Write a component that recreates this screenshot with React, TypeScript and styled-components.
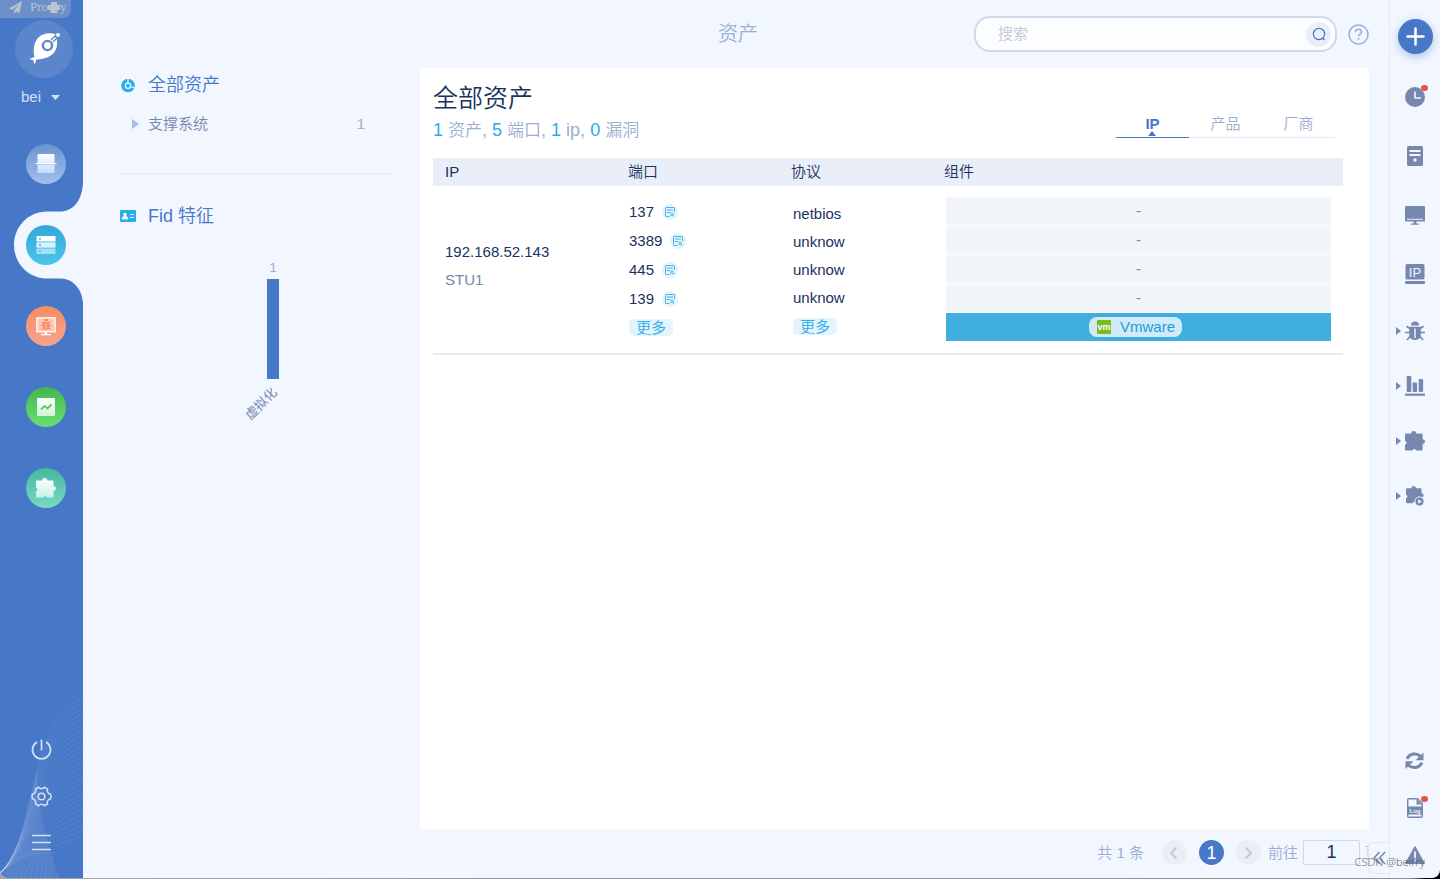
import React from "react";
import styled, { createGlobalStyle, css } from "styled-components";

const c = {
  bg: "#f1f6ff",
  blue: "#4777c7",
  cyan: "#29adeb",
  navy: "#18335f",
  slate: "#7688ad",
  pale: "#9aadd3",
  line: "#e4eaf6",
};

const GlobalStyle = createGlobalStyle`
  * { box-sizing: border-box; }
  html { background: linear-gradient(90deg, #a2a3a5 0, #8b8e94 98%, #000 99%); }
  body {
    margin: 0;
    font-family: "Liberation Sans", "Noto Sans CJK SC", sans-serif;
    font-size: 15px;
    line-height: 20px;
    font-weight: 350;
    color: ${c.navy};
  }
  button, input { font: inherit; color: inherit; padding: 0; margin: 0; border: 0; background: none; }
  button { cursor: pointer; }
  a { color: inherit; text-decoration: none; }
  svg { display: block; flex: none; }
  h1, h2, p, ul { margin: 0; padding: 0; font-weight: 350; list-style: none; }
`;

const Shell = styled.div`
  position: relative;
  display: flex;
  min-height: calc(100vh - 1px);
  background: ${c.bg};
  border-radius: 0 0 8px 8px;
  overflow: hidden;
`;

/* ---------- left bar ---------- */

const Sidebar = styled.aside`
  position: relative;
  flex: none;
  width: 83px;
  display: flex;
  flex-direction: column;
  padding-top: 20px;
  background: ${c.blue};
  color: #d3e0f8;
`;

const ProxyTag = styled.div`
  position: absolute;
  top: 0;
  left: 0;
  display: flex;
  align-items: center;
  width: 71px;
  height: 18px;
  padding: 0 0 4px 9px;
  border-radius: 0 0 8px 0;
  background: #6c8fca;
  color: #bcc4d2;
  font-family: "Liberation Serif", serif;
  font-size: 13px;
  line-height: 14px;
`;

const ProxyText = styled.span`
  display: flex;
  align-items: center;
  margin-left: 8px;
`;

const Avatar = styled.div`
  width: 58px;
  height: 58px;
  margin-left: 15px;
  border-radius: 50%;
  background: #5c86cb;
`;

const UserButton = styled.button`
  display: flex;
  align-items: center;
  gap: 10px;
  height: 38px;
  margin-left: 21px;
`;

const Nav = styled.nav`
  display: flex;
  flex-direction: column;
  gap: 41px;
  padding: 28px 0 0 26px;
`;

const NavLink = styled.a`
  position: relative;
  display: block;
  width: 40px;
  height: 40px;
`;

const NavDisc = styled.span<{ $from: string; $to: string }>`
  position: relative;
  display: grid;
  place-items: center;
  width: 40px;
  height: 40px;
  border-radius: 50%;
  background: linear-gradient(${(p) => p.$from}, ${(p) => p.$to});
`;

const Notch = styled.svg`
  position: absolute;
  left: -12px;
  top: -42px;
`;

const Waves = styled.svg`
  position: absolute;
  left: 0;
  bottom: 0;
`;

const SideTools = styled.div`
  position: relative;
  display: flex;
  flex-direction: column;
  gap: 24px;
  margin-top: auto;
  padding: 0 0 23px 30px;
`;

const SideTool = styled.button`
  width: 23px;
  height: 23px;
`;

/* ---------- middle ---------- */

const Main = styled.main`
  position: relative;
  flex: 1;
  min-width: 0;
  display: flex;
  flex-direction: column;
`;

const Header = styled.header`
  display: grid;
  grid-template-columns: 1fr auto 1fr;
  align-items: center;
  height: 68px;
  padding: 0 20px 0 24px;
`;

const PageTitle = styled.h1`
  grid-column: 2;
  font-size: 20px;
  line-height: 28px;
  color: ${c.pale};
`;

const HeaderTools = styled.div`
  display: flex;
  align-items: center;
  justify-content: flex-end;
  gap: 11px;
`;

const SearchBox = styled.form`
  display: flex;
  align-items: center;
  width: 363px;
  height: 36px;
  padding: 0 4px 0 22px;
  border: 2px solid #cfd9ea;
  border-radius: 16px;
  background: #fcfdff;
`;

const SearchInput = styled.input`
  flex: 1;
  min-width: 0;
  outline: none;
  &::placeholder { color: #c3c7d0; opacity: 1; }
`;

const SearchButton = styled.button`
  display: grid;
  place-items: center;
  width: 25px;
  height: 25px;
  border-radius: 50%;
  background: #e9eef8;
`;

const Content = styled.div`
  flex: 1;
  display: flex;
  padding-right: 20px;
`;

const Filters = styled.section`
  flex: none;
  width: 337px;
  padding: 0 25px 0 37px;
`;

const FilterTitle = styled.h2`
  display: flex;
  align-items: center;
  gap: 12px;
  height: 34px;
  font-size: 18px;
  color: ${c.blue};
`;

const FilterRow = styled.button`
  display: flex;
  align-items: center;
  width: 100%;
  height: 44px;
  padding: 0 30px 0 12px;
  gap: 9px;
  color: ${c.slate};
`;

const FilterCount = styled.span`
  margin-left: auto;
  color: ${c.pale};
`;

const Divider = styled.hr`
  margin: 27px 0 25px;
  border: 0;
  border-top: 1px solid ${c.line};
`;

const Card = styled.section`
  flex: 1;
  min-width: 0;
  padding: 14px 26px 20px 13px;
  background: #fff;
`;

const CardHead = styled.div`
  display: flex;
  align-items: flex-end;
  justify-content: space-between;
  margin-bottom: 16px;
`;

const CardTitle = styled.h2`
  font-size: 25px;
  line-height: 32px;
`;

const Stats = styled.p`
  margin-top: 4px;
  height: 24px;
  font-size: 18px;
  line-height: 24px;
  color: ${c.pale};
  b { font-weight: 400; color: ${c.cyan}; }
`;

const Unit = styled.span`
  font-size: 17px;
`;

const Tabs = styled.div`
  display: flex;
  margin: 0 8px 4px 0;
`;

const Tab = styled.button<{ $active?: boolean }>`
  position: relative;
  width: 73px;
  height: 28px;
  border-bottom: 1px solid ${c.line};
  color: ${c.pale};
  ${(p) =>
    p.$active &&
    css`
      border-color: ${c.blue};
      color: ${c.blue};
      font-weight: 700;
      &::after {
        content: "";
        position: absolute;
        left: 32px;
        bottom: 1px;
        border: 4px solid transparent;
        border-top: 0;
        border-bottom: 5px solid ${c.blue};
      }
    `}
`;

const Table = styled.table`
  width: 100%;
  table-layout: fixed;
  border-collapse: collapse;
  text-align: left;
  th {
    height: 28px;
    padding: 0;
    background: #eaeef8;
    font-weight: 350;
    line-height: 20px;
  }
  th:first-child, td:first-child { padding-left: 12px; }
  tbody tr { border-bottom: 2px solid #e6ebf7; }
`;

const Col = styled.col<{ $w?: number }>`
  width: ${(p) => (p.$w ? `${p.$w}px` : "auto")};
`;

const Cell = styled.td<{ $pad?: string }>`
  vertical-align: top;
  padding: ${(p) => p.$pad || "0"};
`;

const HostCell = styled.td`
  vertical-align: middle;
  padding: 0 0 8px;
  line-height: 28px;
`;

const HostName = styled.div`
  color: ${c.slate};
`;

const Line = styled.li<{ $h: number }>`
  display: flex;
  align-items: center;
  gap: 8px;
  height: ${(p) => p.$h}px;
`;

const PortButton = styled.button`
  display: grid;
  place-items: center;
  width: 16px;
  height: 16px;
  border-radius: 50%;
  background: #e3f4fc;
`;

const MoreButton = styled.button`
  width: 44px;
  height: 17px;
  border-radius: 5px;
  background: #e3f4fc;
  color: ${c.cyan};
  line-height: 17px;
`;

const Components = styled.ul`
  display: grid;
  gap: 1px;
`;

const Component = styled.li<{ $on?: boolean }>`
  display: flex;
  align-items: center;
  justify-content: center;
  height: 28px;
  background: ${(p) => (p.$on ? "#40afe0" : "#f2f5fa")};
  color: ${c.slate};
`;

const Product = styled.a`
  display: flex;
  align-items: center;
  gap: 9px;
  height: 20px;
  margin-right: 6px;
  padding: 0 7px 0 8px;
  border-radius: 8px;
  background: #d0eaf8;
  color: #249bd8;
`;

const Footer = styled.footer`
  display: flex;
  align-items: center;
  justify-content: flex-end;
  height: 49px;
  padding: 0 9px 2px 0;
  color: ${c.pale};
`;

const Pages = styled.div`
  display: flex;
  gap: 12px;
  margin: 0 7px 0 18px;
`;

const PageButton = styled.button<{ $active?: boolean }>`
  display: grid;
  place-items: center;
  width: 25px;
  height: 25px;
  border-radius: 50%;
  background: ${(p) => (p.$active ? c.blue : "#e9eef7")};
  color: ${(p) => (p.$active ? "#fff" : "#c0c7d4")};
  font-size: 18px;
`;

const Goto = styled.label`
  display: flex;
  align-items: center;
  gap: 5px;
`;

const GotoInput = styled.input`
  width: 57px;
  height: 25px;
  border: 1px solid #cdd8ec;
  border-radius: 2px;
  background: ${c.bg};
  text-align: center;
  font-size: 18px;
  color: ${c.navy};
`;

const Collapse = styled.button`
  position: absolute;
  right: 0;
  bottom: 4px;
  display: grid;
  place-items: center;
  width: 21px;
  height: 32px;
  border: 1px solid #dfe7f5;
  border-right: 0;
  border-radius: 6px 0 0 6px;
  background: ${c.bg};
  color: #687fae;
`;

/* ---------- right bar ---------- */

const Rail = styled.aside`
  flex: none;
  display: flex;
  flex-direction: column;
  width: 51px;
  padding-top: 19px;
  border-left: 1px solid ${c.line};
  color: ${c.slate};
`;

const AddButton = styled.button`
  display: grid;
  place-items: center;
  align-self: center;
  width: 35px;
  height: 35px;
  margin-bottom: 13px;
  border-radius: 50%;
  background: ${c.blue};
  box-shadow: 0 3px 8px rgba(71, 119, 199, 0.4);
`;

const RailGroup = styled.div<{ $bottom?: boolean }>`
  display: flex;
  flex-direction: column;
  margin-top: ${(p) => (p.$bottom ? "auto" : "0")};
`;

const RailButton = styled.button<{ $h: number }>`
  display: grid;
  grid-template-columns: 12px 20px 12px;
  column-gap: 3px;
  align-items: center;
  height: ${(p) => p.$h}px;
`;

const RailArrow = styled.span`
  justify-self: end;
  margin-right: 1px;
  border: 4px solid transparent;
  border-left: 5px solid ${c.slate};
  border-right: 0;
`;

const RailIcon = styled.span`
  position: relative;
  grid-column: 2;
`;

const Badge = styled.i`
  position: absolute;
  top: -2px;
  right: -3px;
  width: 7px;
  height: 6px;
  border-radius: 50%;
  background: #f04c48;
`;

const Credit = styled.div`
  position: absolute;
  right: 15px;
  bottom: 8px;
  font-family: "Noto Sans", sans-serif;
  font-size: 11px;
  line-height: 16px;
  color: rgba(70, 74, 82, 0.8);
  pointer-events: none;
`;

/* ---------- drawings ---------- */

const PUZZLE =
  "M1.500 2.500H6.200A2.500 2.500 0 0 1 11.200 2.500H16.200C17 2.500 17.600 3 17.600 3.800V8.200A2.400 2.400 0 0 1 17.600 13V18.200C17.600 19 17 19.600 16.200 19.600H11A1.700 1.500 0 0 0 7.600 19.600H1.500C.7 19.600 0 19 0 18.200V13.500A1.500 1.700 0 0 0 0 10V3.800C0 3 .7 2.500 1.500 2.500Z";

const Bug = ({ size = 20, cut }: { size?: number; cut: string }) => (
  <svg width={size} height={size} viewBox="0 0 20 20" fill="currentColor">
    <path d="M6 4.500a4 4 0 0 1 8 0z" />
    <path d="M4.200 5.800h11.600v8a5.800 5.200 0 0 1-11.600 0z" />
    <path d="M1.500 5.200l3.800 2.500M18.500 5.200l-3.800 2.500M0 11.500h5M20 11.500h-5M2 19l3.500-4M18 19l-3.500-4" stroke="currentColor" strokeWidth="1.700" fill="none" />
    <path d="M10 7.500v9.500" stroke={cut} strokeWidth="1.400" />
  </svg>
);

const Chevron = ({ left }: { left?: boolean }) => (
  <svg width="14" height="14" viewBox="0 0 14 14" fill="none" stroke="currentColor" strokeWidth="1.800">
    <path d={left ? "M9.500 1.500L4 7l5.500 5.500" : "M4.500 1.500L10 7l-5.500 5.500"} />
  </svg>
);

const Logo = () => (
  <svg width="58" height="58" viewBox="0 0 58 58">
    <path d="M14 39l5.500-2C18 30 18.500 22 24 17c4.500-4 11-4.500 16.500-2.800C42.800 20 43 27 39.500 32c-4.500 5.500-11 7-18 7.500L19.500 44.500 18.200 40z" fill="#fff" />
    <path d="M37 21l7-7" stroke="#5c86cb" strokeWidth="4" />
    <path d="M36 22l4.500-4.500" stroke="#fff" strokeWidth="1.500" />
    <circle cx="32.500" cy="25.500" r="4.600" fill="#fff" stroke="#5c86cb" strokeWidth="2.400" />
    <circle cx="43" cy="15" r="2" fill="#fff" />
  </svg>
);

const ScanIcon = () => (
  <svg width="22" height="22" viewBox="0 0 22 22">
    <defs>
      <linearGradient id="scan" x2="0" y2="1"><stop stopColor="#fff" /><stop offset="1" stopColor="#c3dafc" /></linearGradient>
    </defs>
    <rect x="2.500" y="1" width="17" height="19" rx="1" fill="url(#scan)" />
    <path d="M2.500 11.500h17" stroke="#b9cff3" strokeWidth="1" />
    <path d="M.5 10.500h21" stroke="#fff" strokeWidth="1" />
  </svg>
);

const AssetIcon = () => (
  <svg width="20" height="20" viewBox="0 0 20 20">
    <rect x=".5" y="1" width="19" height="5.500" rx=".5" fill="#fff" />
    <rect x=".5" y="7.300" width="19" height="5.400" fill="#d9f1fb" />
    <rect x=".5" y="13.500" width="19" height="5.500" rx=".5" fill="#a6e0f6" />
    <path d="M4 2.800v2M4 9v2M4 15.200v2" stroke="#38aee0" strokeWidth="1.400" />
  </svg>
);

const VulnIcon = () => (
  <svg width="20" height="19" viewBox="0 0 20 19" color="#fa8f6b">
    <rect x=".8" y=".8" width="18.400" height="14" fill="#fdcab8" stroke="#fff" strokeWidth="1.200" />
    <path d="M9 15h2v2H9zM5 17h10v1.200H5z" fill="#fff" />
    <svg x="4" y="1.500" width="12" height="12"><Bug size={12} cut="#fdcab8" /></svg>
  </svg>
);

const ReportIcon = () => (
  <svg width="18" height="18" viewBox="0 0 18 18">
    <defs>
      <linearGradient id="report" x2="0" y2="1"><stop stopColor="#fff" /><stop offset="1" stopColor="#d0f3d4" /></linearGradient>
    </defs>
    <rect width="18" height="18" rx="1" fill="url(#report)" />
    <path d="M4 11.500l3.500-3.500 3 2.500 4-4" fill="none" stroke="#45bb51" strokeWidth="1.600" />
  </svg>
);

const PluginIcon = () => (
  <svg width="20" height="20" viewBox="0 0 20 20">
    <defs>
      <linearGradient id="plugin" x2="0" y2="1"><stop stopColor="#fff" /><stop offset="1" stopColor="#c9f1e7" /></linearGradient>
    </defs>
    <path d={PUZZLE} fill="url(#plugin)" />
  </svg>
);

const navItems = [
  { name: "扫描", from: "#6b93cf", to: "#a2bfee", icon: <ScanIcon /> },
  { name: "资产", from: "#34a6da", to: "#4cc5ea", icon: <AssetIcon />, active: true },
  { name: "漏洞", from: "#f78d64", to: "#f6a48e", icon: <VulnIcon /> },
  { name: "报告", from: "#41b94e", to: "#6ade72", icon: <ReportIcon /> },
  { name: "插件", from: "#46b79e", to: "#78d9c6", icon: <PluginIcon /> },
];

const mix = (a: number, b: number, t: number) => a + (b - a) * t;

const WaveLines = () => (
  <Waves width="83" height="180" viewBox="0 0 83 180" fill="none" stroke="#fff">
    <path d="M0 175C26 146 32 100 37 70 36 112 50 155 60 180H4z" fill="#fff" fillOpacity=".07" stroke="none" />
    {Array.from({ length: 27 }, (_, i) => {
      const t = i / 26;
      return (
        <path
          key={i}
          d={`M0 175C${mix(38, 20, t)} ${mix(140, 158, t)} ${mix(26, 50, t)} ${mix(22, 150, t)} 83 ${mix(0, 138, t)}`}
          strokeOpacity=".1"
          strokeWidth=".8"
        />
      );
    })}
    {Array.from({ length: 10 }, (_, i) => (
      <path key={`f${i}`} d={`M${i * 5 + 5} 180Q${14 + i * 4} ${162 - i} ${30 + i * 3} 154`} strokeOpacity=".1" strokeWidth=".8" />
    ))}
  </Waves>
);

const railTop = [
  {
    name: "历史", badge: true,
    icon: <><circle cx="10" cy="10" r="10" /><path d="M10 4.500v6.500h6" fill="none" stroke="#f1f6ff" strokeWidth="1.600" /></>,
  },
  {
    name: "服务器",
    icon: <><rect x="2" y="0" width="16" height="20" rx="1.500" /><path d="M4.500 5h11M4.500 9h11" stroke="#f1f6ff" strokeWidth="1.800" /><circle cx="10" cy="14" r="1.700" fill="#f1f6ff" /></>,
  },
  {
    name: "终端",
    icon: <><rect x="0" y="1" width="20" height="15.500" rx="1" /><path d="M2 14.300h16" stroke="#f1f6ff" strokeWidth="1" /><path d="M8.700 16h2.600v2.500h2.700v1.200H6v-1.200h2.700z" /></>,
  },
  {
    name: "IP",
    icon: <><rect x=".5" y="0" width="19" height="15.500" rx="1.500" /><rect x="0" y="17" width="20" height="3" rx="1" /><text x="10" y="12.500" textAnchor="middle" fontSize="13" fill="#f1f6ff">IP</text></>,
  },
];

const railMiddle = [
  { name: "漏洞", icon: <Bug cut="#f1f6ff" /> },
  {
    name: "统计",
    icon: <><rect x="1.700" y="0" width="4.600" height="16" rx="1" /><rect x="7.700" y="6.500" width="4.400" height="9.500" rx="1" /><rect x="13.700" y="3" width="4.400" height="13" rx="1" /><rect x="0" y="17.600" width="20" height="2.200" /></>,
  },
  { name: "插件", icon: <path d={PUZZLE} /> },
  {
    name: "运行插件",
    icon: <><path d={PUZZLE} transform="translate(1 0) scale(.88)" /><circle cx="14.500" cy="15.500" r="4.600" stroke="#f1f6ff" strokeWidth="1" /><path d="M13.200 13.300v4.400l3.600-2.200z" fill="#f1f6ff" /></>,
  },
];

const railBottom = [
  {
    name: "刷新",
    icon: (
      <>
        <path d="M2 7.800C4.500 2.500 11.500 1.200 15.800 5.500M17 11.700C14.500 17 7.500 18.300 3.200 14" fill="none" stroke="currentColor" strokeWidth="3" />
        <path d="M18.500 1.500V9.200H10.500zM.5 18V10.300H8.500z" />
      </>
    ),
  },
  {
    name: "日志", badge: true,
    icon: <><path d="M4 .8h8.500L17.200 5v13c0 .8-.5 1.300-1.200 1.300H4c-.8 0-1.300-.5-1.300-1.300V2C2.700 1.300 3.200.8 4 .8z" fill="none" stroke="currentColor" strokeWidth="1.500" /><path d="M11.500 1v5.500H17z" /><path d="M2.500 8.500h15v8h-15z" /><text x="10" y="14.500" textAnchor="middle" fontSize="6" fontWeight="700" fill="#f1f6ff">Log</text></>,
  },
  {
    name: "告警",
    icon: <><path d="M10 1.500L19.500 18.500H.5z" stroke="currentColor" strokeLinejoin="round" /><path d="M10 6.500v6.500M10 14.500v2" stroke="#f1f6ff" strokeWidth="1.800" /></>,
  },
];

type RailEntry = { name: string; icon: React.ReactNode; badge?: boolean };

const RailItem = ({ item, h, arrow }: { item: RailEntry; h: number; arrow?: boolean }) => (
  <RailButton $h={h} aria-label={item.name}>
    {arrow && <RailArrow />}
    <RailIcon>
      <svg width="20" height="20" viewBox="0 0 20 20" fill="currentColor" overflow="visible">{item.icon}</svg>
      {item.badge && <Badge />}
    </RailIcon>
  </RailButton>
);

const PortGlyph = () => (
  <svg width="10" height="10" viewBox="0 0 10 10" fill="none" stroke="#45b4e8" strokeWidth="1">
    <path d="M4.500 9.500H1.200a.7.7 0 0 1-.7-.7V1.200C.5.800.8.500 1.200.500h7.600c.4 0 .7.300.7.700V5M2 3h6M2 5.500h3" />
    <circle cx="7" cy="7.300" r="1.400" />
    <path d="M8 8.500l1.300 1.200" />
  </svg>
);

const ports = ["137", "3389", "445", "139"];
const protocols = ["netbios", "unknow", "unknow", "unknow"];

export default function App() {
  return (
    <>
      <GlobalStyle />
      <Shell>
        <Sidebar>
          <WaveLines />
          <ProxyTag>
            <svg width="13" height="13" viewBox="0 0 13 13" fill="currentColor">
              <path d="M13 0L0 7.500l3.500 1.300L11 2.500 5 9.500V13l2-2.500 3.500 1.500z" />
            </svg>
            <ProxyText>
              Pro
              <svg width="12" height="11" viewBox="0 0 12 11" fill="currentColor">
                <path d="M3 0h6v3h3v5H9.500v3h-7V8H0V3h3z" />
              </svg>
              y
            </ProxyText>
          </ProxyTag>
          <Avatar><Logo /></Avatar>
          <UserButton>
            bei
            <svg width="9" height="5" viewBox="0 0 9 5" fill="currentColor"><path d="M0 0h9L4.500 5z" /></svg>
          </UserButton>
          <Nav>
            {navItems.map((n) => (
              <NavLink key={n.name} href="#" aria-label={n.name}>
                {n.active && (
                  <Notch width="70" height="120" viewBox="0 0 70 120">
                    <path d="M69 0H70V120H69C68 106 59 95.500 46 95.500H33C14 95.500 0 80 0 62S14 28.500 33 28.500H46C59 28.500 68 18 69 0z" fill={c.bg} />
                  </Notch>
                )}
                <NavDisc $from={n.from} $to={n.to}>{n.icon}</NavDisc>
              </NavLink>
            ))}
          </Nav>
          <SideTools>
            <SideTool aria-label="退出">
              <svg width="23" height="23" viewBox="0 0 23 23" fill="none" stroke="currentColor" strokeWidth="1.700">
                <path d="M11.500 1.500v11M7 4a9 9 0 1 0 9 0" />
              </svg>
            </SideTool>
            <SideTool aria-label="设置">
              <svg width="23" height="23" viewBox="0 0 23 23" fill="none" stroke="currentColor" strokeWidth="1.500">
                <path d="M8.500 2.300c1.500 1.800 4.500 1.800 6 0l3 1.700c-.9 2.400.7 4.700 3.100 5.200.5 1.500.5 3.100 0 4.600-2.400.5-4 2.800-3.100 5.200l-3 1.700c-1.500-1.800-4.500-1.800-6 0l-3-1.700c.9-2.400-.7-4.700-3.100-5.200-.5-1.500-.5-3.100 0-4.600C4.800 8.700 6.400 6.400 5.500 4z" />
                <circle cx="11.500" cy="11.500" r="3.300" />
              </svg>
            </SideTool>
            <SideTool aria-label="菜单">
              <svg width="23" height="23" viewBox="0 0 23 23" stroke="currentColor" strokeWidth="1.500">
                <path d="M2 3.500h19M2 10.500h19M2 17.500h19" />
              </svg>
            </SideTool>
          </SideTools>
        </Sidebar>

        <Main>
          <Header>
            <PageTitle>资产</PageTitle>
            <HeaderTools>
              <SearchBox role="search" onSubmit={(e) => e.preventDefault()}>
                <SearchInput placeholder="搜索" aria-label="搜索" />
                <SearchButton aria-label="开始搜索">
                  <svg width="14" height="14" viewBox="0 0 14 14" fill="none" stroke={c.blue} strokeWidth="1.200">
                    <circle cx="7" cy="7" r="5.600" /><path d="M10.500 11l2 2" />
                  </svg>
                </SearchButton>
              </SearchBox>
              <button aria-label="帮助">
                <svg width="21" height="21" viewBox="0 0 21 21" fill="none" stroke={c.pale} strokeWidth="1.500">
                  <circle cx="10.500" cy="10.500" r="9.500" />
                  <path d="M7.500 8.200c0-1.800 1.300-2.900 3-2.900s3 1.100 3 2.700c0 2.100-3 2.300-3 4.500M10.500 14v1.700" />
                </svg>
              </button>
            </HeaderTools>
          </Header>

          <Content>
            <Filters>
              <FilterTitle>
                <svg width="16" height="16" viewBox="0 0 16 16">
                  <circle cx="8" cy="8.500" r="6.800" fill={c.cyan} />
                  <path d="M8 1v7.500l7 2.500" fill="none" stroke={c.bg} strokeWidth="1.200" />
                  <circle cx="8" cy="8.800" r="2.600" fill={c.cyan} stroke={c.bg} strokeWidth="1.300" />
                </svg>
                全部资产
              </FilterTitle>
              <FilterRow>
                <svg width="7" height="10" viewBox="0 0 7 10" fill="#a5bce6"><path d="M0 0l7 5-7 5z" /></svg>
                支撑系统
                <FilterCount>1</FilterCount>
              </FilterRow>
              <Divider />
              <FilterTitle>
                <svg width="16" height="12" viewBox="0 0 16 12">
                  <rect width="16" height="12" rx="1" fill={c.cyan} />
                  <path d="M2 9c0-2 1.500-2.500 3-2.500S8 7 8 9zM10 4.500h4M10 7.500h4" fill="#fff" stroke="#fff" strokeWidth=".8" />
                  <circle cx="5" cy="4.500" r="1.700" fill="#fff" />
                </svg>
                Fid 特征
              </FilterTitle>
              <svg width="275" height="200" viewBox="0 0 275 200" role="img" aria-label="虚拟化 1">
                <text x="153" y="39" textAnchor="middle" fontSize="13" fill={c.pale}>1</text>
                <rect x="147" y="46" width="12" height="100" fill={c.blue} />
                <text transform="translate(158 160) rotate(-45)" textAnchor="end" fontSize="13" fontWeight="400" fill={c.slate}>虚拟化</text>
              </svg>
            </Filters>

            <Card>
              <CardHead>
                <div>
                  <CardTitle>全部资产</CardTitle>
                  <Stats>
                    <b>1</b> <Unit>资产</Unit>, <b>5</b> <Unit>端口</Unit>, <b>1</b> ip, <b>0</b> <Unit>漏洞</Unit>
                  </Stats>
                </div>
                <Tabs role="tablist">
                  <Tab role="tab" aria-selected $active>IP</Tab>
                  <Tab role="tab">产品</Tab>
                  <Tab role="tab">厂商</Tab>
                </Tabs>
              </CardHead>
              <Table>
                <colgroup><Col $w={195} /><Col $w={163} /><Col $w={153} /><Col /></colgroup>
                <thead>
                  <tr><th>IP</th><th>端口</th><th>协议</th><th>组件</th></tr>
                </thead>
                <tbody>
                  <tr>
                    <HostCell>
                      192.168.52.143
                      <HostName>STU1</HostName>
                    </HostCell>
                    <Cell $pad="11px 0 0 1px">
                      <ul>
                        {ports.map((p) => (
                          <Line key={p} $h={29}>
                            {p}
                            <PortButton aria-label={`端口 ${p}`}><PortGlyph /></PortButton>
                          </Line>
                        ))}
                        <Line $h={29}><MoreButton>更多</MoreButton></Line>
                      </ul>
                    </Cell>
                    <Cell $pad="14px 0 0 2px">
                      <ul>
                        {protocols.map((p, i) => (
                          <Line key={i} $h={28}>{p}</Line>
                        ))}
                        <Line $h={28}><MoreButton>更多</MoreButton></Line>
                      </ul>
                    </Cell>
                    <Cell $pad="11px 12px 12px 2px">
                      <Components>
                        {ports.map((p) => <Component key={p}>-</Component>)}
                        <Component $on>
                          <Product href="#">
                            <svg width="14" height="14" viewBox="0 0 14 14">
                              <rect width="14" height="14" fill="#78be20" />
                              <text x="7" y="9.500" textAnchor="middle" fontSize="9" fontWeight="700" fill="#fff">vm</text>
                            </svg>
                            Vmware
                          </Product>
                        </Component>
                      </Components>
                    </Cell>
                  </tr>
                </tbody>
              </Table>
            </Card>
          </Content>

          <Footer>
            <span>共 1 条</span>
            <Pages>
              <PageButton aria-label="上一页"><Chevron left /></PageButton>
              <PageButton $active>1</PageButton>
              <PageButton aria-label="下一页"><Chevron /></PageButton>
            </Pages>
            <Goto>前往<GotoInput defaultValue="1" />页</Goto>
          </Footer>
          <Collapse aria-label="收起">
            <svg width="13" height="14" viewBox="0 0 13 14" fill="none" stroke="currentColor" strokeWidth="1.300">
              <path d="M6.500 1L1 7l5.500 6M12 1L6.500 7l5.500 6" />
            </svg>
          </Collapse>
        </Main>

        <Rail>
          <AddButton aria-label="新建">
            <svg width="19" height="19" viewBox="0 0 19 19" stroke="#fff" strokeWidth="2.500" strokeLinecap="round">
              <path d="M9.500 1.500v16M1.500 9.500h16" />
            </svg>
          </AddButton>
          <RailGroup>{railTop.map((r) => <RailItem key={r.name} item={r} h={59} />)}</RailGroup>
          <RailGroup>{railMiddle.map((r) => <RailItem key={r.name} item={r} h={55} arrow />)}</RailGroup>
          <RailGroup $bottom>{railBottom.map((r) => <RailItem key={r.name} item={r} h={47} />)}</RailGroup>
        </Rail>

        <Credit>CSDN @beirry</Credit>
      </Shell>
    </>
  );
}
